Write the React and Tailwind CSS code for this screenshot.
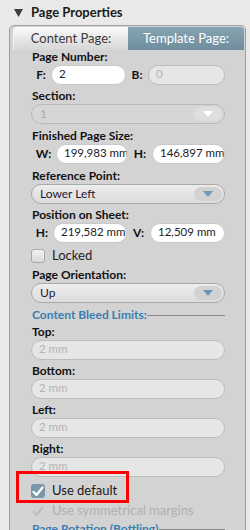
import React from 'react';

const font = "font-['Lato','Liberation_Sans',sans-serif]";

// small triangle used by the drop-down buttons
const Arrow = ({ color }) => (
  <svg width="10" height="6" viewBox="0 0 10 6">
    <path d="M0 0h10L5 6z" fill={color} />
  </svg>
);

const Check = ({ color }) => (
  <svg width="12" height="11" viewBox="0 0 12 11" fill="none">
    <path d="M1.5 5.8l3 3.2L10.5 1.5" stroke={color} strokeWidth="2.2" strokeLinecap="round" strokeLinejoin="round" />
  </svg>
);

const Label = ({ children, className = '' }) => (
  <div className={`ml-[1px] h-[14px] leading-[14px] text-[12px] font-bold text-[#111] whitespace-nowrap ${className}`}>{children}</div>
);

const Input = ({ value, disabled, className = '' }) => (
  <div
    className={`h-[20px] rounded-full border pl-[7px] text-[11.5px] leading-[16px] whitespace-nowrap overflow-hidden ${
      disabled
        ? 'bg-[#e6e6e6] border-[#bdbdbd] text-[#b4b4b4]'
        : 'bg-white border-[#c9c9c9] text-[#222]'
    } ${className}`}
  >
    {value}
  </div>
);

const Select = ({ value, disabled }) => (
  <div
    className={`h-[20px] rounded-full border flex items-center justify-between pl-[8px] pr-[2px] text-[12px] ${
      disabled
        ? 'bg-[#d6d6d6] border-[#bababa] text-[#a9a9a9]'
        : 'bg-gradient-to-b from-[#ededed] to-[#dcdcdc] border-[#a9a9a9] text-[#1f1838]'
    }`}
  >
    <span>{value}</span>
    <span
      className={`w-[28px] h-[14px] rounded-full flex items-center justify-center ${
        disabled ? 'bg-[#dedede]' : 'bg-[#d2d2d2]'
      }`}
    >
      <Arrow color={disabled ? '#ffffff' : '#6e98b8'} />
    </span>
  </div>
);

const Pair = ({ a, b, va, vb, disabledB, wa, la, lb }) => (
  <div className="flex items-center h-[20px]">
    <div className={`${la} shrink-0 flex justify-center text-[12px] font-bold text-[#111]`}>{a}</div>
    <Input value={va} className={`${wa} shrink-0`} />
    <div className={`${lb} shrink-0 flex justify-center text-[12px] font-bold text-[#111]`}>{b}</div>
    <Input value={vb} disabled={disabledB} className="flex-1 min-w-0" />
  </div>
);

const Section = ({ title }) => (
  <div className="flex items-center h-[14px] text-[12px] font-bold text-[#3b7db1] whitespace-nowrap">
    <span className="ml-[1px]">{title}</span>
    <span className="h-px bg-[#8a8a8a] flex-1" />
  </div>
);

export default function App() {
  return (
    <div className={`w-[250px] h-[530px] overflow-hidden bg-[#e9e9e9] ${font}`}>
      {/* header */}
      <div className="flex items-center h-[25px] pl-[14px] gap-[8px]">
        <svg width="9" height="8" viewBox="0 0 9 8">
          <path d="M0 0h9L4.5 8z" fill="#3d3d3d" />
        </svg>
        <span className="text-[13px] font-bold text-[#1a1a1a]">Page Properties</span>
      </div>

      {/* panel */}
      <div className="ml-[9px] mr-[4px] h-[520px] rounded-t-[5px] border border-[#9f9f9f] bg-[#d3d3d3]">
        <div className="flex ml-[3px] mr-[1px] mt-[1px] h-[23px] text-[13px]">
          <div className="w-[115px] rounded-tl-[4px] border-l border-[#f5f5f5] bg-gradient-to-b from-[#fafafa] to-[#d6d6d6] flex items-center justify-center text-[#3a3a3a]">
            Content Page:
          </div>
          <div className="flex-1 rounded-tr-[4px] bg-gradient-to-b from-[#86a3b1] to-[#6f8e9d] flex items-center justify-center text-white">
            Template Page:
          </div>
        </div>

        <div className="pl-[21px] pr-[20px] flex flex-col">
          <Label>Page Number:</Label>
          <div className="mt-[1px]">
            <Pair a="F:" b="B:" va="2" vb="0" disabledB la="w-[20px]" wa="w-[75px]" lb="w-[22px]" />
          </div>

          <Label className="mt-[4px]">Section:</Label>
          <div className="mt-[1px]"><Select value="1" disabled /></div>

          <Label className="mt-[5px]">Finished Page Size:</Label>
          <div className="mt-[1px]">
            <Pair a="W:" b="H:" va="199,983 mm" vb="146,897 mm" la="w-[25px]" wa="w-[72px]" lb="w-[24px]" />
          </div>

          <Label className="mt-[5px]">Reference Point:</Label>
          <div className="mt-[1px]"><Select value="Lower Left" /></div>

          <Label className="mt-[4px]">Position on Sheet:</Label>
          <div className="mt-[1px]">
            <Pair a="H:" b="V:" va="219,582 mm" vb="12,509 mm" la="w-[22px]" wa="w-[74px]" lb="w-[23px]" />
          </div>

          <div className="mt-[6px] flex items-center h-[14px] gap-[7px] text-[13px] text-[#222]">
            <span className="w-[14px] h-[14px] rounded-[3px] border border-[#a8a8a8] bg-gradient-to-b from-[#f2f2f2] to-[#dadada]" />
            <span>Locked</span>
          </div>

          <Label className="mt-[5px]">Page Orientation:</Label>
          <div className="mt-[1px]"><Select value="Up" /></div>

          <div className="mt-[5px]">
            <Section title="Content Bleed Limits:" />
          </div>

          <Label className="mt-[3px]">Top:</Label>
          <div className="mt-[1px]"><Input value="2 mm" disabled /></div>

          <Label className="mt-[4px]">Bottom:</Label>
          <div className="mt-[1px]"><Input value="2 mm" disabled /></div>

          <Label className="mt-[4px]">Left:</Label>
          <div className="mt-[1px]"><Input value="2 mm" disabled /></div>

          <Label className="mt-[4px]">Right:</Label>
          <div className="mt-[1px]"><Input value="2 mm" disabled /></div>

          <div className="relative mt-[6px] flex items-center h-[16px] gap-[7px] text-[13px] text-[#1a1a1a]">
            <span className="w-[14px] h-[14px] rounded-[3px] bg-[#7b98aa] flex items-center justify-center">
              <Check color="#ffffff" />
            </span>
            <span>Use default</span>
            <div className="absolute left-[-15px] top-[-12px] w-[113px] h-[32px] border-[3px] border-[#ff0000]" />
          </div>

          <div className="mt-[4px] flex items-center h-[16px] gap-[7px] text-[13px] text-[#b0b0b0]">
            <span className="w-[14px] h-[14px] flex items-center justify-center">
              <Check color="#bdbdbd" />
            </span>
            <span>Use symmetrical margins</span>
          </div>

          <div className="mt-[3px]">
            <Section title="Page Rotation (Bottling)" />
          </div>
        </div>
      </div>
    </div>
  );
}
